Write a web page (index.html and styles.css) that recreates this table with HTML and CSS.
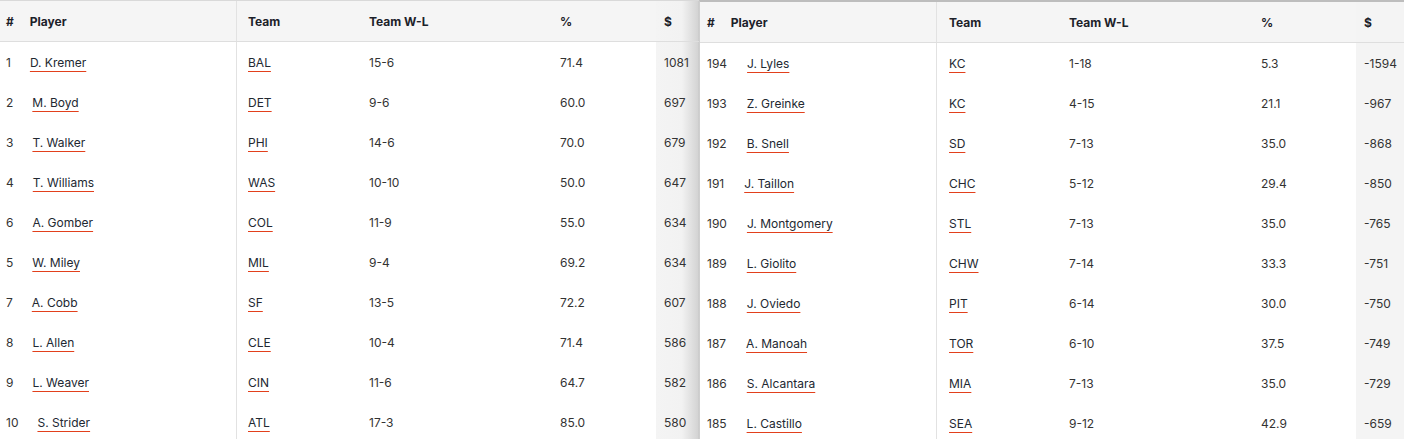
FILE: index.html
```html
<!DOCTYPE html>
<html lang="en">
<head>
<meta charset="utf-8">
<title>Leaders</title>
<link rel="stylesheet" href="styles.css">
</head>
<body>
<div class="board">
  <section class="panel panel-left">
    <div class="row head">
      <div class="c c1"><span class="rank">#</span><span>Player</span></div>
      <div class="c c2">Team</div>
      <div class="c c3">Team W-L</div>
      <div class="c c4">%</div>
      <div class="c c5">$</div>
    </div>
    <div class="row"><div class="c c1"><span class="rank">1</span><a class="lk">D. Kremer</a></div><div class="c c2"><a class="lk">BAL</a></div><div class="c c3">15-6</div><div class="c c4">71.4</div><div class="c c5">1081</div></div>
    <div class="row"><div class="c c1"><span class="rank">2</span><a class="lk">M. Boyd</a></div><div class="c c2"><a class="lk">DET</a></div><div class="c c3">9-6</div><div class="c c4">60.0</div><div class="c c5">697</div></div>
    <div class="row"><div class="c c1"><span class="rank">3</span><a class="lk">T. Walker</a></div><div class="c c2"><a class="lk">PHI</a></div><div class="c c3">14-6</div><div class="c c4">70.0</div><div class="c c5">679</div></div>
    <div class="row"><div class="c c1"><span class="rank">4</span><a class="lk">T. Williams</a></div><div class="c c2"><a class="lk">WAS</a></div><div class="c c3">10-10</div><div class="c c4">50.0</div><div class="c c5">647</div></div>
    <div class="row"><div class="c c1"><span class="rank">6</span><a class="lk">A. Gomber</a></div><div class="c c2"><a class="lk">COL</a></div><div class="c c3">11-9</div><div class="c c4">55.0</div><div class="c c5">634</div></div>
    <div class="row"><div class="c c1"><span class="rank">5</span><a class="lk">W. Miley</a></div><div class="c c2"><a class="lk">MIL</a></div><div class="c c3">9-4</div><div class="c c4">69.2</div><div class="c c5">634</div></div>
    <div class="row"><div class="c c1"><span class="rank">7</span><a class="lk">A. Cobb</a></div><div class="c c2"><a class="lk">SF</a></div><div class="c c3">13-5</div><div class="c c4">72.2</div><div class="c c5">607</div></div>
    <div class="row"><div class="c c1"><span class="rank">8</span><a class="lk">L. Allen</a></div><div class="c c2"><a class="lk">CLE</a></div><div class="c c3">10-4</div><div class="c c4">71.4</div><div class="c c5">586</div></div>
    <div class="row"><div class="c c1"><span class="rank">9</span><a class="lk">L. Weaver</a></div><div class="c c2"><a class="lk">CIN</a></div><div class="c c3">11-6</div><div class="c c4">64.7</div><div class="c c5">582</div></div>
    <div class="row"><div class="c c1"><span class="rank">10</span><a class="lk">S. Strider</a></div><div class="c c2"><a class="lk">ATL</a></div><div class="c c3">17-3</div><div class="c c4">85.0</div><div class="c c5">580</div></div>
  </section>
  <section class="panel panel-right">
    <div class="row head">
      <div class="c c1"><span class="rank">#</span><span>Player</span></div>
      <div class="c c2">Team</div>
      <div class="c c3">Team W-L</div>
      <div class="c c4">%</div>
      <div class="c c5">$</div>
    </div>
    <div class="row"><div class="c c1"><span class="rank">194</span><a class="lk">J. Lyles</a></div><div class="c c2"><a class="lk">KC</a></div><div class="c c3">1-18</div><div class="c c4">5.3</div><div class="c c5">-1594</div></div>
    <div class="row"><div class="c c1"><span class="rank">193</span><a class="lk">Z. Greinke</a></div><div class="c c2"><a class="lk">KC</a></div><div class="c c3">4-15</div><div class="c c4">21.1</div><div class="c c5">-967</div></div>
    <div class="row"><div class="c c1"><span class="rank">192</span><a class="lk">B. Snell</a></div><div class="c c2"><a class="lk">SD</a></div><div class="c c3">7-13</div><div class="c c4">35.0</div><div class="c c5">-868</div></div>
    <div class="row"><div class="c c1"><span class="rank">191</span><a class="lk">J. Taillon</a></div><div class="c c2"><a class="lk">CHC</a></div><div class="c c3">5-12</div><div class="c c4">29.4</div><div class="c c5">-850</div></div>
    <div class="row"><div class="c c1"><span class="rank">190</span><a class="lk">J. Montgomery</a></div><div class="c c2"><a class="lk">STL</a></div><div class="c c3">7-13</div><div class="c c4">35.0</div><div class="c c5">-765</div></div>
    <div class="row"><div class="c c1"><span class="rank">189</span><a class="lk">L. Giolito</a></div><div class="c c2"><a class="lk">CHW</a></div><div class="c c3">7-14</div><div class="c c4">33.3</div><div class="c c5">-751</div></div>
    <div class="row"><div class="c c1"><span class="rank">188</span><a class="lk">J. Oviedo</a></div><div class="c c2"><a class="lk">PIT</a></div><div class="c c3">6-14</div><div class="c c4">30.0</div><div class="c c5">-750</div></div>
    <div class="row"><div class="c c1"><span class="rank">187</span><a class="lk">A. Manoah</a></div><div class="c c2"><a class="lk">TOR</a></div><div class="c c3">6-10</div><div class="c c4">37.5</div><div class="c c5">-749</div></div>
    <div class="row"><div class="c c1"><span class="rank">186</span><a class="lk">S. Alcantara</a></div><div class="c c2"><a class="lk">MIA</a></div><div class="c c3">7-13</div><div class="c c4">35.0</div><div class="c c5">-729</div></div>
    <div class="row"><div class="c c1"><span class="rank">185</span><a class="lk">L. Castillo</a></div><div class="c c2"><a class="lk">SEA</a></div><div class="c c3">9-12</div><div class="c c4">42.9</div><div class="c c5">-659</div></div>
  </section>
</div>
</body>
</html>
```
FILE: styles.css
```css
* { box-sizing: border-box; }
html, body { margin: 0; padding: 0; background: #fff; }
body {
  font-family: Inter, "Noto Sans", "Liberation Sans", sans-serif;
  font-size: 12px;
  color: #333;
  overflow: hidden;
}
.board { display: flex; align-items: flex-start; }
.panel { flex: none; }
.panel-left { width: 699px; border-top: 1px solid #d9d9d9; }
.panel-right { width: 705px; border-top: 2px solid #bdbdbd; border-left: 1px solid #cfcfcf; }

.row { display: grid; height: 40px; }
.panel-left .row { grid-template-columns: 237px 120px 191px 108px 43px; }
.panel-right .row { grid-template-columns: 237px 120px 192px 107px 48px; }

.head {
  background: #f5f5f5;
  border-bottom: 1px solid #dedede;
  font-weight: 700;
  color: #1c2129;
}
.row.head { height: 41px; }

.c { display: flex; align-items: center; padding-left: 12px; white-space: nowrap; overflow: hidden; }
.c1 { border-right: 1px solid #e2e2e2; padding-left: 6px; }
.panel-right .c1 { padding-left: 7px; }
.c2 { padding-left: 11px; }
.panel-right .c2 { padding-left: 12px; }
.c5 { padding-left: 8px; background: #f4f4f4; }
.panel-left .c5 { background: linear-gradient(to right, #f4f4f4 0, #f2f2f2 60%, #d4d4d4 97%, #c8c8c8 100%); }

.rank { margin-right: 19px; color: #333; }
.panel-right .rank { margin-right: 20px; }
.head .rank, .panel-right .head .rank { margin-right: 16px; color: #1c2129; }

.lk {
  color: #222831;
  text-decoration: underline;
  text-decoration-color: #e2401c;
  text-decoration-thickness: 1px;
  text-underline-offset: 4px;
}
```
